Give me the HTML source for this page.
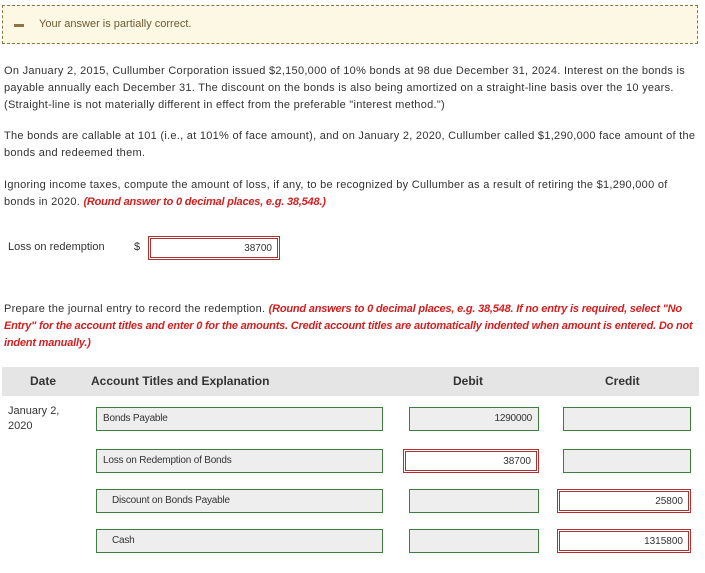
<!DOCTYPE html>
<html><head><meta charset="utf-8"><style>
body{margin:0;width:705px;height:573px;background:#fff;font-family:"Liberation Sans",sans-serif;color:#333;position:relative;overflow:hidden}
.a{position:absolute}
.banner{left:2px;top:5px;width:696px;height:39px;background:#fdf8e4;border:1px dashed #8a7544;box-sizing:border-box}
p.t{position:absolute;left:4px;margin:0;font-size:11px;line-height:17px;width:700px;letter-spacing:0.28px;white-space:nowrap}
.red{color:#d21f1f;font-weight:bold;font-style:italic;letter-spacing:-0.2px}
.box{position:absolute;height:24px;box-sizing:border-box;background:#eee;border:1px solid #3e7d3e;font-size:10px;line-height:22px;padding:0 6px;letter-spacing:-0.2px}
.rb{position:absolute;height:24px;box-sizing:border-box;background:#fff;border:3px double #b03030;font-size:10px;line-height:19px;padding:0 5px;text-align:right}
.r{text-align:right}
.hd{left:2px;top:367px;width:697px;height:29px;background:#e5e5e5;font-weight:bold;font-size:12px}
.hd span{position:absolute;top:7px}
</style></head><body>
<div class="a banner"></div>
<div class="a" style="left:14px;top:24px;width:10px;height:3px;background:#8a7544"></div>
<div class="a" style="left:39px;top:18px;font-size:11px;color:#6b5a32">Your answer is partially correct.</div>
<p class="t" style="top:63px">On January 2, 2015, Cullumber Corporation issued $2,150,000 of 10% bonds at 98 due December 31, 2024. Interest on the bonds is<br>payable annually each December 31. The discount on the bonds is also being amortized on a straight-line basis over the 10 years.<br>(Straight-line is not materially different in effect from the preferable "interest method.")</p>
<p class="t" style="top:128px">The bonds are callable at 101 (i.e., at 101% of face amount), and on January 2, 2020, Cullumber called $1,290,000 face amount of the<br>bonds and redeemed them.</p>
<p class="t" style="top:177px">Ignoring income taxes, compute the amount of loss, if any, to be recognized by Cullumber as a result of retiring the $1,290,000 of<br>bonds in 2020. <span class="red">(Round answer to 0 decimal places, e.g. 38,548.)</span></p>
<div class="a" style="left:8px;top:241px;font-size:11px">Loss on redemption</div>
<div class="a" style="left:134px;top:241px;font-size:11px">$</div>
<div class="rb" style="left:148px;top:236px;width:132px">38700</div>
<p class="t" style="top:301px">Prepare the journal entry to record the redemption. <span class="red">(Round answers to 0 decimal places, e.g. 38,548. If no entry is required, select "No<br>Entry" for the account titles and enter 0 for the amounts. Credit account titles are automatically indented when amount is entered. Do not<br>indent manually.)</span></p>
<div class="a hd"><span style="left:28px">Date</span><span style="left:89px">Account Titles and Explanation</span><span style="left:451px">Debit</span><span style="left:603px">Credit</span></div>
<div class="a" style="left:8px;top:404px;font-size:11px;line-height:15px">January 2,<br>2020</div>
<div class="box" style="left:96px;top:407px;width:287px">Bonds Payable</div>
<div class="box r" style="left:409px;top:407px;width:130px">1290000</div>
<div class="box" style="left:563px;top:407px;width:128px"></div>
<div class="box" style="left:96px;top:449px;width:287px">Loss on Redemption of Bonds</div>
<div class="rb" style="left:403px;top:449px;width:136px">38700</div>
<div class="box" style="left:563px;top:449px;width:128px"></div>
<div class="box" style="left:96px;top:489px;width:287px;padding-left:15px">Discount on Bonds Payable</div>
<div class="box" style="left:409px;top:489px;width:130px"></div>
<div class="rb" style="left:557px;top:489px;width:134px">25800</div>
<div class="box" style="left:96px;top:529px;width:287px;padding-left:15px">Cash</div>
<div class="box" style="left:409px;top:529px;width:130px"></div>
<div class="rb" style="left:557px;top:529px;width:134px">1315800</div>
</body></html>
